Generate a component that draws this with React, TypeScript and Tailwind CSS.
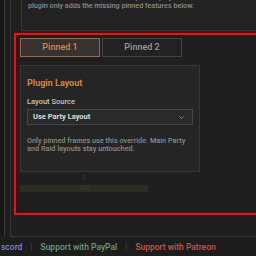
export default function App() {
  return (
    <div
      className="flex h-[256px] w-[256px] flex-col overflow-hidden bg-[#1d1d1d] text-[#c8c8c8]"
      style={{ fontFamily: 'Roboto, "Liberation Sans", sans-serif' }}
    >
      <div className="flex h-[237px] shrink-0">
        {/* left scroll strip */}
        <div className="w-[5px] shrink-0 border-r border-[#3a3a3a] bg-[#181818]" />
        <div className="w-[5px] shrink-0" />
        {/* main frame */}
        <div className="flex w-[300px] shrink-0 flex-col border-b border-l border-[#363636] bg-[#1f1f1f] pb-[20px] pl-[3px]">
          <div className="ml-[7px] mt-[-14px] h-[45px] shrink-0 border-b border-l border-[#383838] bg-[#222] px-[6px] pt-[8px] text-[7.2px] font-medium leading-[8px] text-[#8c8c8c]">
            <p>Use the native controls above for pinned player selection. This</p>
            <p>plugin only adds the missing pinned features below.</p>
          </div>
          <div className="mt-[2px] flex h-[182px] shrink-0 flex-col border-2 border-[#ff0a0a] pl-[4px] pt-[3px]">
            <div className="flex gap-[2px]">
              <div className="flex h-[19px] w-[80px] items-center justify-center border border-[#a0683c] bg-[#36322e] text-[9px] font-medium text-[#d2884e]">
                Pinned 1
              </div>
              <div className="flex h-[19px] w-[80px] items-center justify-center border border-[#444] bg-[#222] text-[9px] font-medium text-[#9a9a9a]">
                Pinned 2
              </div>
            </div>
            <div className="mt-[8px] flex h-[107px] w-[180px] flex-col border border-[#363636] bg-[#252525] px-[6px] pt-[11px]">
              <div className="text-[9px] font-bold leading-[12px] text-[#d0844a]">Plugin Layout</div>
              <div className="mt-[8px] text-[7.5px] font-medium leading-[10px] text-[#c4c4c4]">Layout Source</div>
              <div className="mt-[2px] flex h-[16px] w-[166px] items-center justify-between border border-[#474747] bg-[#2a2a2a] pl-[5px] pr-[8px]">
                <span className="text-[7.5px] font-bold text-[#dcdcdc]">Use Party Layout</span>
                <svg width="5" height="3" viewBox="0 0 5 3">
                  <path d="M0.5 0.5 L2.5 2.5 L4.5 0.5" stroke="#9a9a9a" strokeWidth="0.9" fill="none" />
                </svg>
              </div>
              <div className="mt-[12px] text-[7.3px] font-medium leading-[7.5px] text-[#8a8a8a]">
                <p>Only pinned frames use this override. Main Party</p>
                <p>and Raid layouts stay untouched.</p>
              </div>
            </div>
            <div className="ml-[62px] mt-[2px] text-[7px] leading-[8px] text-[#3a3a3a]">0</div>
            <div className="mt-[3px] flex h-[7px] w-[128px] items-center justify-center bg-[#2c2c22] text-[7px] leading-[7px] text-[#3c3c30]">
              100
            </div>
          </div>
        </div>
      </div>
      <div className="flex items-center gap-[8px] pt-[4px] text-[8.5px] font-medium">
        <span className="ml-[1px] text-[#7f86c8]">scord</span>
        <span className="text-[#4a4a4a]">|</span>
        <span className="text-[#6f9a80]">Support with PayPal</span>
        <span className="text-[#4a4a4a]">|</span>
        <span className="text-[#c0584a]">Support with Patreon</span>
      </div>
    </div>
  );
}
